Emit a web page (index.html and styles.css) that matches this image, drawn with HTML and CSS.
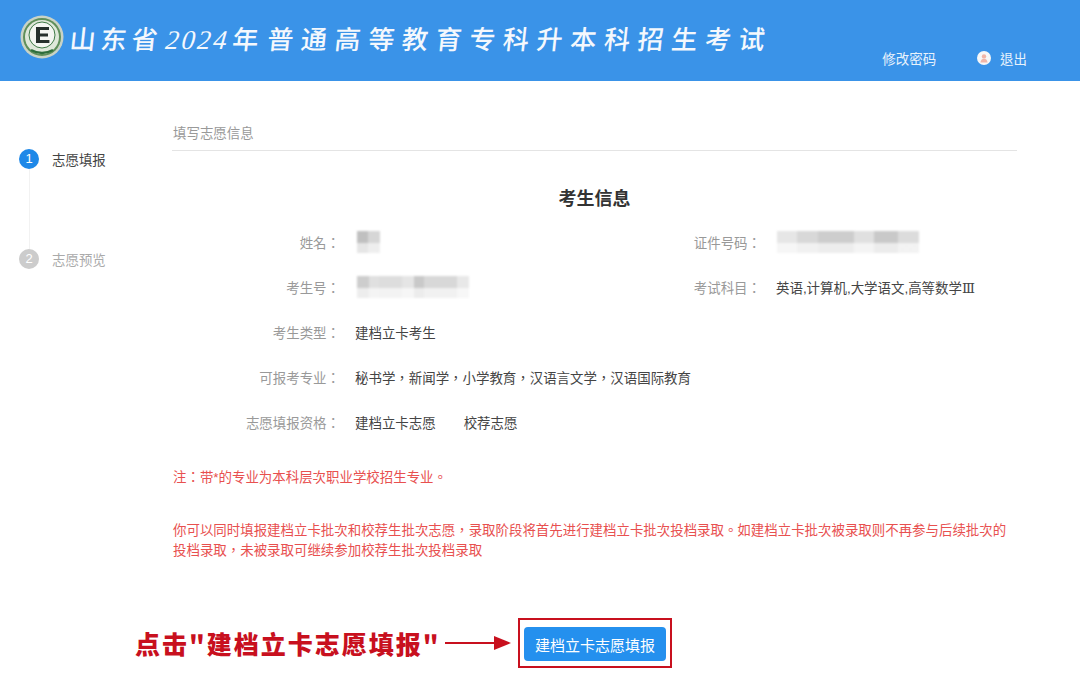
FILE: index.html
```html
<!DOCTYPE html>
<html lang="zh-CN">
<head>
    <meta charset="UTF-8">
    <meta name="viewport" content="width=device-width, initial-scale=1.0">
    <title>山东省2024年普通高等教育专科升本科招生考试</title>
    <link rel="stylesheet" href="styles.css">
</head>
<body>
    <header class="header">
        <svg class="logo" viewBox="0 0 44 44" width="44" height="44">
            <circle cx="22" cy="22" r="21.500" fill="#c9d3c6"/>
            <circle cx="22" cy="22" r="19" fill="#5f8f5a"/>
            <circle cx="22" cy="22" r="17" fill="#dfe8da"/>
            <circle cx="22" cy="20" r="13" fill="#f4f6f2" stroke="#3f7a46" stroke-width="1"/>
            <path d="M16 12h13v3h-9v3.400h8v3h-8v3.600h9.400v3H16z" fill="#26302c"/>
            <path d="M11 35q11 6 22 0" fill="none" stroke="#2f6e3c" stroke-width="2.400"/>
        </svg>
        <h1 class="site-title">山东省<span class="year">2024</span><span class="title-year">年</span><span class="title-rest">普通高等教育专科升本科招生考试</span></h1>
        <nav class="top-nav">
            <a class="top-link" href="#">修改密码</a>
            <a class="top-link logout" href="#">
                <svg class="avatar" viewBox="0 0 14 14" width="14" height="14">
                    <circle cx="7" cy="7" r="7" fill="#f6f7f8"/>
                    <circle cx="7" cy="5.400" r="2.200" fill="#f0b5a8"/>
                    <path d="M3.400 11.400c.4-2.600 1.800-3.600 3.600-3.600s3.200 1 3.600 3.600z" fill="#f0b5a8"/>
                </svg>
                退出
            </a>
        </nav>
    </header>

    <div class="page">
        <aside class="steps">
            <div class="step active"><span class="step-num">1</span>志愿填报</div>
            <div class="step-line"></div>
            <div class="step"><span class="step-num">2</span>志愿预览</div>
        </aside>

        <main class="content">
            <div class="section-title">填写志愿信息</div>
            <h2 class="info-title">考生信息</h2>

            <div class="info-grid">
                <div class="info-row">
                    <span class="info-label">姓名：</span>
                    <div class="blur-mask mask-name"></div>
                </div>
                <div class="info-row right">
                    <span class="info-label">证件号码：</span>
                    <div class="blur-mask mask-id"></div>
                </div>
                <div class="info-row">
                    <span class="info-label">考生号：</span>
                    <div class="blur-mask mask-no"></div>
                </div>
                <div class="info-row right">
                    <span class="info-label">考试科目：</span>
                    <span class="info-value">英语,计算机,大学语文,高等数学<span class="roman">Ⅲ</span></span>
                </div>
                <div class="info-row wide">
                    <span class="info-label">考生类型：</span>
                    <span class="info-value">建档立卡考生</span>
                </div>
                <div class="info-row wide">
                    <span class="info-label">可报考专业：</span>
                    <span class="info-value">秘书学，新闻学，小学教育，汉语言文学，汉语国际教育</span>
                </div>
                <div class="info-row wide">
                    <span class="info-label">志愿填报资格：</span>
                    <span class="info-value">建档立卡志愿</span>
                    <span class="info-value extra">校荐志愿</span>
                </div>
            </div>

            <p class="note">注：带*的专业为本科层次职业学校招生专业。</p>
            <p class="note long">你可以同时填报建档立卡批次和校荐生批次志愿，录取阶段将首先进行建档立卡批次投档录取。如建档立卡批次被录取则不再参与后续批次的投档录取，未被录取可继续参加校荐生批次投档录取</p>
        </main>
    </div>

    <div class="action">
        <span class="callout">点击"建档立卡志愿填报"</span>
        <svg class="arrow" viewBox="0 0 66 16" width="66" height="16">
            <path d="M0 8h52" stroke="#c8101e" stroke-width="1.800"/>
            <path d="M49 1L66 8 49 15z" fill="#c8101e"/>
        </svg>
        <div class="highlight">
            <button class="btn">建档立卡志愿填报</button>
        </div>
    </div>
</body>
</html>
```

FILE: styles.css
```css
* {
    box-sizing: border-box;
}
body {
    margin: 0;
    height: 689px;
    overflow: hidden;
    background-color: white;
    font-family: "Liberation Sans", "Noto Sans CJK TC", sans-serif;
    font-feature-settings: "locl" 0;
    font-size: 13.450px;
    text-spacing-trim: space-all;
    color: #333;
}
.header {
    display: flex;
    align-items: center;
    height: 81px;
    padding: 0 53px 7px 20px;
    background-color: #3a93e8;
}
.logo {
    flex-shrink: 0;
}
.site-title {
    margin: 0 0 0 6px;
    font-family: "Noto Sans CJK SC", sans-serif;
    font-size: 26px;
    font-weight: 500;
    letter-spacing: 5px;
    color: #f4f8fd;
    white-space: nowrap;
    transform: skewX(-6deg);
}
.year {
    margin: 0 3px 0 3px;
    font-family: "Liberation Serif", serif;
    font-style: italic;
    font-size: 27px;
    font-weight: 400;
    letter-spacing: 2.400px;
}
.title-year {
    margin-right: 4px;
}
.title-rest {
    letter-spacing: 7.670px;
}
.top-nav {
    display: flex;
    align-items: center;
    gap: 41px;
    margin-left: auto;
    padding-top: 41px;
}
.top-link {
    display: flex;
    align-items: center;
    gap: 9px;
    color: #e8f2fc;
    text-decoration: none;
}
.page {
    display: flex;
}
.steps {
    width: 172px;
    padding: 68px 0 0 19px;
    flex-shrink: 0;
}
.step {
    display: flex;
    align-items: center;
    gap: 13px;
    height: 20px;
    color: #aaa;
}
.step.active {
    color: #444;
}
.step-num {
    width: 20px;
    height: 20px;
    border-radius: 50%;
    background-color: #ccc;
    color: white;
    font-size: 13px;
    line-height: 20px;
    text-align: center;
}
.step.active .step-num {
    background-color: #1e88e8;
}
.step-line {
    width: 1px;
    height: 80px;
    margin-left: 10px;
    background-color: #f2f2f2;
}
.content {
    width: 845px;
}
.section-title {
    height: 70px;
    padding: 44px 0 0 1px;
    border-bottom: 1px solid #e4e4e4;
    color: #999;
    line-height: 18px;
}
.info-title {
    margin: 36px 0 0;
    font-size: 18px;
    font-weight: 700;
    line-height: 24px;
    text-align: center;
    color: #333;
}
.info-grid {
    display: grid;
    grid-template-columns: 424px 1fr;
    grid-auto-rows: 45px;
    margin-top: 8px;
}
.info-row {
    display: flex;
    align-items: center;
}
.info-row.wide {
    grid-column: 1 / 3;
}
.info-label {
    width: 168px;
    margin-right: 15px;
    text-align: right;
    color: #999;
}
.info-row.right .info-label {
    width: 165px;
    margin-right: 15px;
}
.info-value {
    color: #444;
}
.info-value.extra {
    margin-left: 28px;
}
.roman {
    font-family: "Liberation Serif", "DejaVu Serif", serif;
}
.blur-mask {
    height: 22px;
    filter: blur(1px);
}
/* top row of each mask is darker, the lower row almost fades out */
.mask-name {
    width: 23px;
    margin-left: 2px;
    background:
        linear-gradient(180deg, transparent 55%, rgba(255, 255, 255, 0.6) 55%),
        linear-gradient(90deg, #c0c0c0 50%, #d6d6d6 50%);
}
.mask-id {
    width: 142px;
    margin-left: 1px;
    background:
        linear-gradient(180deg, transparent 55%, rgba(255, 255, 255, 0.65) 55%),
        linear-gradient(90deg, #e6e6e6 14%, #d8d8d8 14% 29%, #cdcdcd 29% 54%, #e0e0e0 54% 68%, #c9c9c9 68% 85%, #dcdcdc 85%);
}
.mask-no {
    width: 112px;
    margin-left: 2px;
    background:
        linear-gradient(180deg, transparent 55%, rgba(255, 255, 255, 0.65) 55%),
        linear-gradient(90deg, #cdcdcd 11%, #e0e0e0 11% 20%, #dddddd 20% 40%, #e5e5e5 40% 51%, #c9c9c9 51% 60%, #d8d8d8 60% 89%, #e8e8e8 89%);
}
.note {
    margin: 0;
    padding-left: 1px;
    line-height: 20px;
    color: #e8504f;
}
.note:first-of-type {
    margin-top: 24px;
}
.note.long {
    margin-top: 33px;
}
.action {
    display: flex;
    align-items: center;
    margin-top: 57px;
    padding-left: 135px;
}
.callout {
    width: 310px;
    font-family: "Noto Sans CJK SC", sans-serif;
    font-size: 25px;
    font-weight: 900;
    letter-spacing: 2px;
    color: #c8101e;
    white-space: nowrap;
}
.arrow {
    margin-right: 7px;
}
.highlight {
    padding: 7px 4px 5px;
    border: 2px solid #c8101e;
}
.btn {
    display: block;
    width: 142px;
    height: 34px;
    padding: 0;
    border: none;
    border-radius: 4px;
    background-color: #2490ee;
    color: white;
    font-family: inherit;
    font-size: 15px;
}
```
